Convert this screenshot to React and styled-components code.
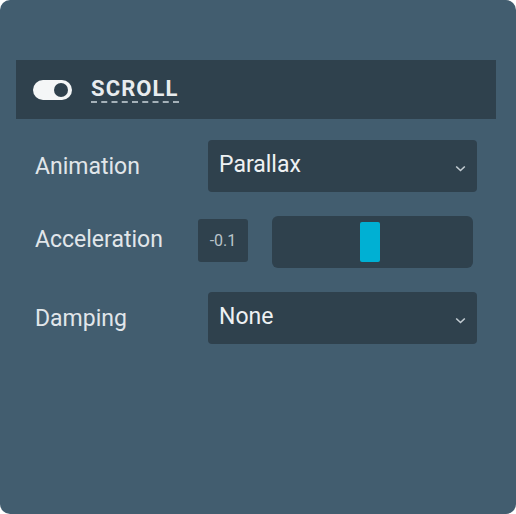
import React from 'react';
import styled, { createGlobalStyle } from 'styled-components';

const GlobalStyle = createGlobalStyle`
  html, body {
    margin: 0;
    padding: 0;
    background: #ffffff;
  }
  body {
    font-family: Roboto, "Liberation Sans", sans-serif;
  }
`;

const Panel = styled.div`
  width: 516px;
  height: 514px;
  box-sizing: border-box;
  background-color: #425d6f;
  border-radius: 10px;
  padding-top: 60px;
`;

const Header = styled.div`
  margin: 0 20px 0 16px;
  height: 59px;
  background-color: #2f414d;
  display: flex;
  align-items: center;
  padding-left: 17px;
`;

const Toggle = styled.div`
  width: 39px;
  height: 20px;
  border-radius: 10px;
  background-color: #f4f6f7;
  display: flex;
  align-items: center;
  justify-content: flex-end;
  padding-right: 4px;
  box-sizing: border-box;
`;

const Knob = styled.div`
  width: 14px;
  height: 14px;
  border-radius: 50%;
  background-color: #2f414d;
`;

const Title = styled.span`
  margin-left: 19px;
  font-size: 22px;
  font-weight: 700;
  letter-spacing: 1.1px;
  color: #e8ecef;
  line-height: 24px;
  border-bottom: 2px dashed #a5b1b9;
  padding-bottom: 0;
`;

const Rows = styled.div`
  display: flex;
  flex-direction: column;
  gap: 24px;
  padding: 21px 0 0 35px;
`;

const Row = styled.div`
  display: flex;
  align-items: center;
  height: 52px;
`;

const Label = styled.div`
  width: ${p => p.$width}px;
  font-size: 23px;
  color: #e1e6ea;
  margin-top: ${p => p.$lift ? '-6px' : '0'};
`;

const Select = styled.div`
  width: 269px;
  height: 52px;
  box-sizing: border-box;
  background-color: #2f414d;
  border-radius: 4px;
  display: flex;
  align-items: center;
  justify-content: space-between;
  padding: 0 11px 4px 11px;
  font-size: 23px;
  color: #eef1f3;
`;

const Chevron = styled.svg`
  width: 11px;
  height: 7px;
  margin-top: 8px;
`;

const NumberBox = styled.div`
  width: 50px;
  height: 43px;
  box-sizing: border-box;
  background-color: #2f414d;
  border-radius: 3px;
  display: flex;
  align-items: center;
  justify-content: center;
  font-size: 16px;
  color: #b9c3ca;
  margin-top: -4px;
`;

const Track = styled.div`
  margin-left: 24px;
  width: 201px;
  height: 52px;
  background-color: #2f414d;
  border-radius: 6px;
  display: flex;
  align-items: center;
  padding-left: 88px;
  box-sizing: border-box;
`;

const Thumb = styled.div`
  width: 20px;
  height: 40px;
  border-radius: 2px;
  background-color: #00b0d3;
`;

function Dropdown({ value }) {
  return (
    <Select>
      <span>{value}</span>
      <Chevron viewBox="0 0 11 7">
        <path d="M1.2 1.5 L5.5 5.5 L9.8 1.5" fill="none" stroke="#c3ccd2" strokeWidth="1.6" />
      </Chevron>
    </Select>
  );
}

export default function App() {
  return (
    <>
      <GlobalStyle />
      <Panel>
        <Header>
          <Toggle>
            <Knob />
          </Toggle>
          <Title>SCROLL</Title>
        </Header>
        <Rows>
          <Row>
            <Label $width={173}>Animation</Label>
            <Dropdown value="Parallax" />
          </Row>
          <Row>
            <Label $width={163} $lift>Acceleration</Label>
            <NumberBox>-0.1</NumberBox>
            <Track>
              <Thumb />
            </Track>
          </Row>
          <Row>
            <Label $width={173}>Damping</Label>
            <Dropdown value="None" />
          </Row>
        </Rows>
      </Panel>
    </>
  );
}
